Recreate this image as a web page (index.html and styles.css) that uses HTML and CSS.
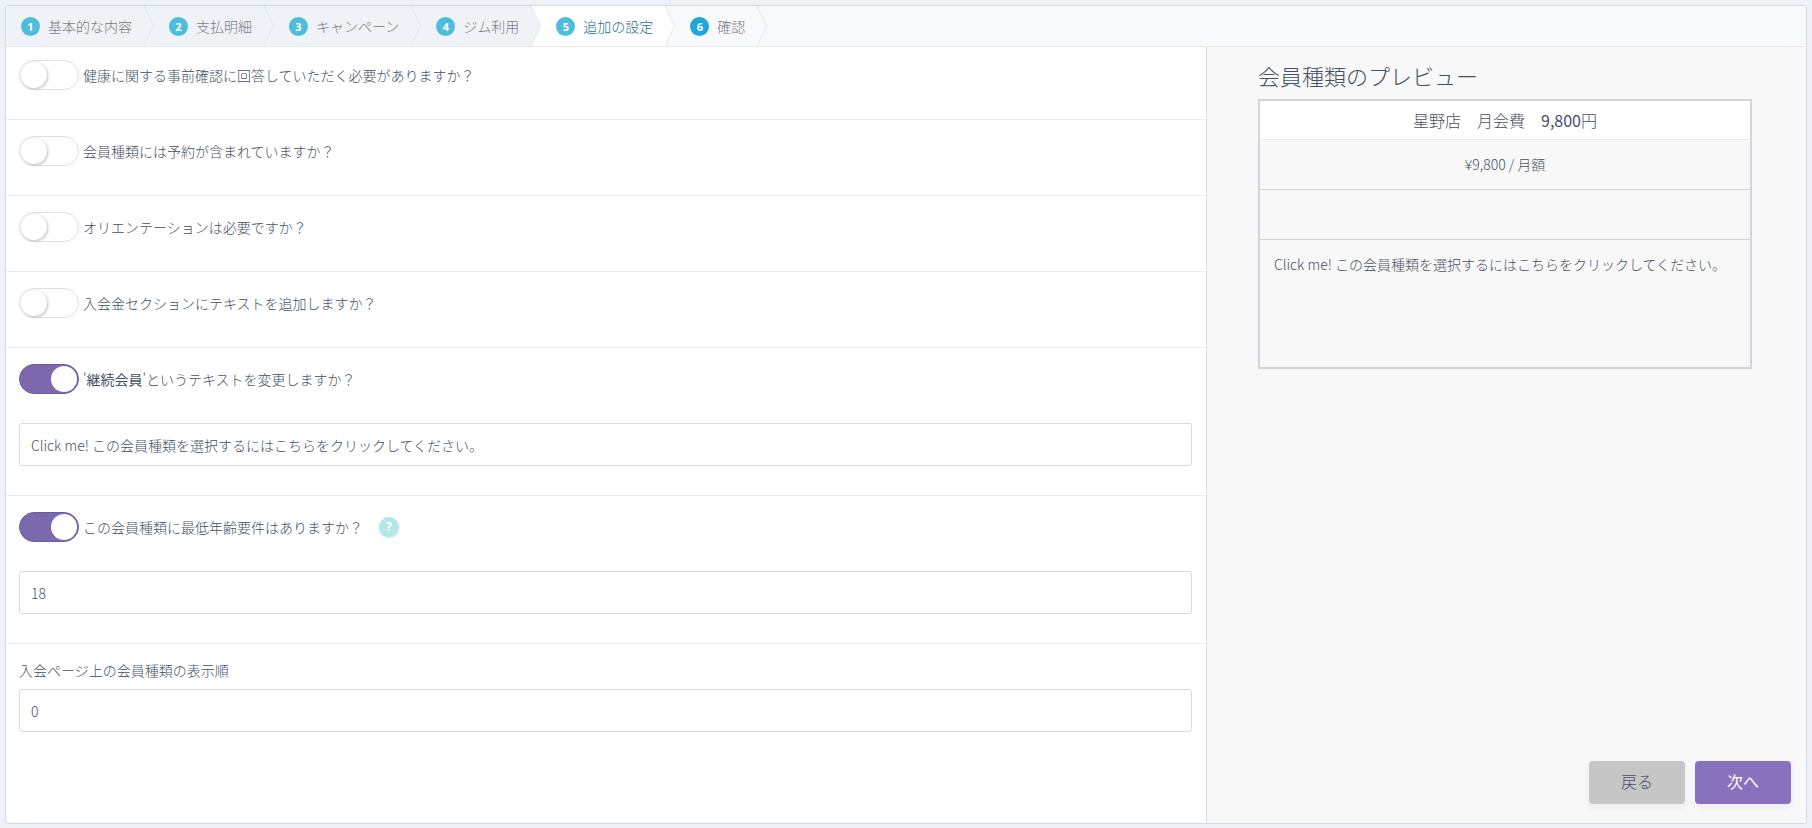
FILE: index.html
```html
<!DOCTYPE html>
<html lang="ja">
<head>
<meta charset="utf-8">
<meta name="viewport" content="width=device-width, initial-scale=1">
<title>会員種類 - 追加の設定</title>
<link rel="stylesheet" href="styles.css">
</head>
<body>
<div class="panel">
  <nav class="steps" aria-label="ステップ">
    <a class="step" href="#"><span class="step-num">1</span>基本的な内容<svg class="chevron" viewBox="0 0 10 40" aria-hidden="true"><path d="M0 0L9.500 20L0 40"/></svg></a>
    <a class="step" href="#"><span class="step-num">2</span>支払明細<svg class="chevron" viewBox="0 0 10 40" aria-hidden="true"><path d="M0 0L9.500 20L0 40"/></svg></a>
    <a class="step" href="#"><span class="step-num">3</span>キャンペーン<svg class="chevron" viewBox="0 0 10 40" aria-hidden="true"><path d="M0 0L9.500 20L0 40"/></svg></a>
    <a class="step" href="#"><span class="step-num">4</span>ジム利用<svg class="chevron" viewBox="0 0 10 40" aria-hidden="true"><path d="M0 0L9.500 20L0 40"/></svg></a>
    <a class="step step-active" href="#" aria-current="step"><span class="step-num">5</span>追加の設定<svg class="chevron" viewBox="0 0 10 40" aria-hidden="true"><path d="M0 0L9.500 20L0 40"/></svg></a>
    <a class="step step-next" href="#"><span class="step-num">6</span>確認<svg class="chevron" viewBox="0 0 10 40" aria-hidden="true"><path d="M0 0L9.500 20L0 40"/></svg></a>
  </nav>
  <div class="content">
    <form class="settings">
      <div class="row">
        <div class="switch-line"><input class="switch" type="checkbox" id="health"><label for="health">健康に関する事前確認に回答していただく必要がありますか？</label></div>
      </div>
      <div class="row">
        <div class="switch-line"><input class="switch" type="checkbox" id="booking"><label for="booking">会員種類には予約が含まれていますか？</label></div>
      </div>
      <div class="row">
        <div class="switch-line"><input class="switch" type="checkbox" id="orientation"><label for="orientation">オリエンテーションは必要ですか？</label></div>
      </div>
      <div class="row">
        <div class="switch-line"><input class="switch" type="checkbox" id="fee-text"><label for="fee-text">入会金セクションにテキストを追加しますか？</label></div>
      </div>
      <div class="row">
        <div class="switch-line"><input class="switch" type="checkbox" id="change-text" checked><label for="change-text">'<strong>継続会員</strong>'というテキストを変更しますか？</label></div>
        <input class="field" type="text" aria-label="継続会員のテキスト" value="Click me! この会員種類を選択するにはこちらをクリックしてください。">
      </div>
      <div class="row">
        <div class="switch-line"><input class="switch" type="checkbox" id="min-age" checked><label for="min-age">この会員種類に最低年齢要件はありますか？</label><button class="help" type="button">?</button></div>
        <input class="field" type="text" aria-label="最低年齢" value="18">
      </div>
      <div class="row row-order">
        <label for="order">入会ページ上の会員種類の表示順</label>
        <input class="field" type="text" id="order" value="0">
      </div>
    </form>
    <aside class="side">
      <h2 class="side-title">会員種類のプレビュー</h2>
      <div class="card">
        <div class="card-head">星野店　月会費　<strong>9,800</strong>円</div>
        <div class="card-price">¥9,800 / 月額</div>
        <div class="card-blank"></div>
        <div class="card-text">Click me! この会員種類を選択するにはこちらをクリックしてください。</div>
      </div>
      <div class="actions">
        <button class="btn btn-back" type="button">戻る</button>
        <button class="btn btn-next" type="button">次へ</button>
      </div>
    </aside>
  </div>
</div>
</body>
</html>
```

FILE: styles.css
```css
* {
  box-sizing: border-box;
}

body {
  margin: 0;
  min-height: 100vh;
  padding: 5px 5px 4px;
  display: flex;
  background: #edf1f8;
  color: #465063;
  font: 300 14px/20px "Liberation Sans Narrow", "Noto Sans CJK JP", sans-serif;
}

.panel {
  flex: 1;
  display: flex;
  flex-direction: column;
  border: 1px solid #d3d9e2;
  border-radius: 3px;
  background: #fff;
  overflow: hidden;
}

.steps {
  display: flex;
  background: #f8f9fb;
  border-bottom: 1px solid #e6ebf0;
}

.step {
  position: relative;
  display: flex;
  align-items: center;
  gap: 8px;
  height: 40px;
  padding: 0 12px 0 25px;
  background: #eff3f8;
  color: #777b80;
  text-decoration: none;
  white-space: nowrap;
}

.step:first-child {
  padding-left: 15px;
}

.step-active {
  background: #fff;
  color: #2a7091;
}

.step-next {
  background: #f8f9fb;
}

.step-num {
  width: 19px;
  height: 19px;
  border-radius: 50%;
  background: #4dbddb;
  color: #fff;
  font: 700 11px/19px "Open Sans", sans-serif;
  text-align: center;
}

.step-next .step-num {
  background: #22a5dd;
}

.chevron {
  position: absolute;
  left: 100%;
  top: 0;
  z-index: 1;
  width: 10px;
  height: 40px;
  fill: #eff3f8;
  stroke: #e2e7ed;
}

.step-active .chevron {
  fill: #fff;
}

.step-next .chevron {
  fill: #f8f9fb;
}

.content {
  flex: 1;
  display: grid;
  grid-template-columns: 2fr 1fr;
}

.row {
  padding: 16px 14px 29px 13px;
  border-bottom: 1px solid #e8eaed;
}

.row:first-child {
  padding-top: 13px;
}

.switch-line {
  display: flex;
  align-items: center;
  gap: 4px;
}

.switch {
  appearance: none;
  width: 60px;
  height: 30px;
  margin: 0;
  padding: 1px;
  border: 1px solid #dfdfdf;
  border-radius: 15px;
  background: #fff;
}

.switch::before {
  content: "";
  display: block;
  width: 26px;
  height: 26px;
  border-radius: 50%;
  background: #fff;
  box-shadow: 1px 1px 3px rgba(0, 0, 0, 0.25);
}

.switch:checked {
  border-color: #6c5b9c;
  background: #7b68ae;
}

.switch:checked::before {
  margin-left: auto;
  box-shadow: none;
}

.help {
  width: 20px;
  height: 20px;
  margin-left: 12px;
  padding: 0;
  border: 0;
  border-radius: 50%;
  background: #b5e7e8;
  box-shadow: 0 1px 2px #b5e7e8;
  color: #fff;
  font: 700 12px/20px "Open Sans", sans-serif;
}

.field {
  display: block;
  width: 100%;
  height: 43px;
  margin-top: 29px;
  padding: 0 11px;
  border: 1px solid #d8dadd;
  border-radius: 3px;
  background: #fff;
  color: inherit;
  font: inherit;
}

.row-order {
  border-bottom: 0;
}

.row-order .field {
  margin-top: 9px;
}

.side {
  display: flex;
  flex-direction: column;
  padding: 12px 15px 19px 51px;
  border-left: 1px solid #d6dae1;
  background: #f8f8f8;
}

.side-title {
  margin: 0 0 8px;
  font-size: 22px;
  line-height: 32px;
  font-weight: 300;
}

.card {
  margin-right: 39px;
  border: 2px solid #d3d5dc;
}

.card-head {
  height: 39px;
  background: #fff;
  border-bottom: 1px solid #e8eaed;
  font-size: 16px;
  line-height: 38px;
  text-align: center;
}

.card-price,
.card-blank {
  height: 50px;
  border-bottom: 1px solid #d3d5dc;
  line-height: 48px;
  text-align: center;
}

.card-text {
  min-height: 127px;
  padding: 14px;
}

.actions {
  display: flex;
  justify-content: flex-end;
  gap: 10px;
  margin-top: auto;
}

.btn {
  width: 96px;
  height: 43px;
  padding: 0 0 4px;
  border: 0;
  border-radius: 4px;
  box-shadow: 0 4px 6px rgba(50, 50, 93, 0.06);
  font: inherit;
  font-size: 16px;
}

.btn-back {
  background: #c6c6c6;
  color: #465063;
}

.btn-next {
  background: #8871bd;
  color: #fff;
  font-weight: 400;
}
```
